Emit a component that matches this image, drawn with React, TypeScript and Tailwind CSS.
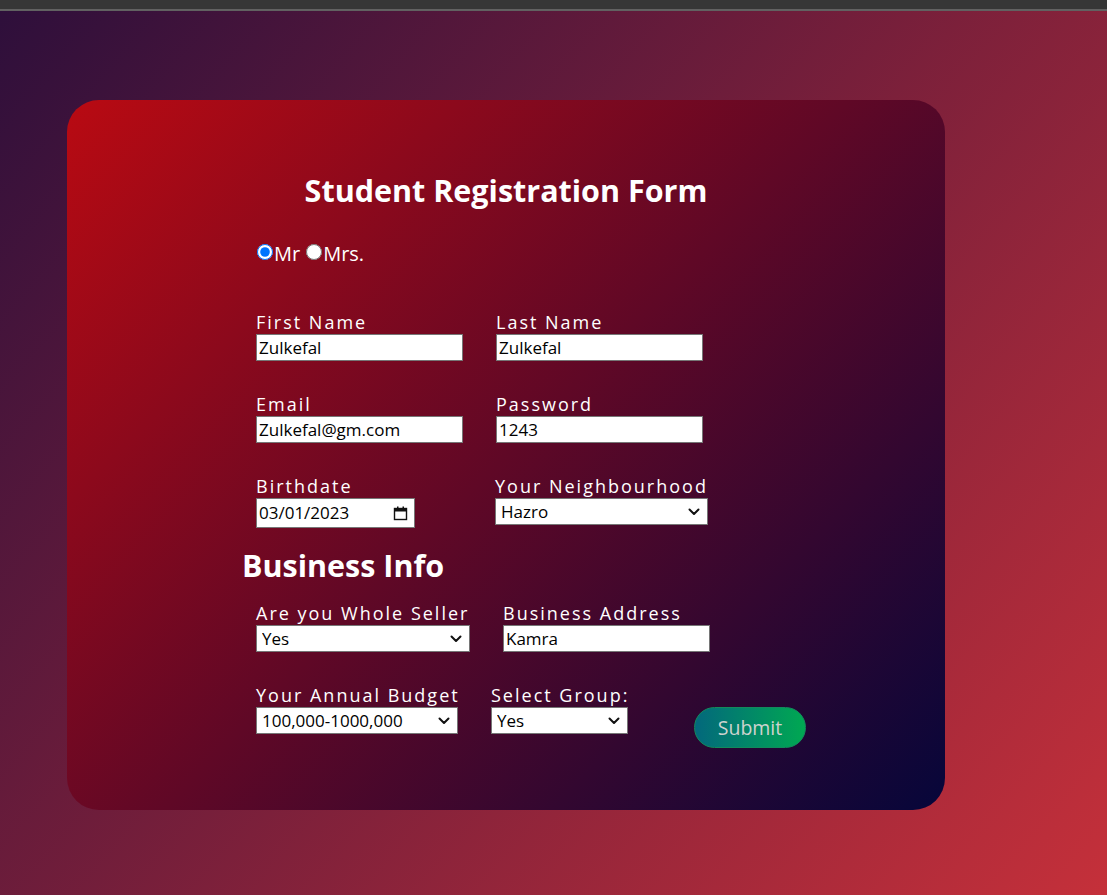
import React from 'react';

function Chevron() {
  return (
    <svg className="pointer-events-none absolute right-[8px] top-1/2 -translate-y-1/2" width="12" height="8" viewBox="0 0 12 8" fill="none">
      <path d="M1.5 1.5L6 6L10.5 1.5" stroke="#111" strokeWidth="2" strokeLinecap="round" strokeLinejoin="round" />
    </svg>
  );
}

function Calendar() {
  return (
    <svg width="15" height="15" viewBox="0 0 15 15" fill="none">
      <rect x="1.5" y="2.5" width="12" height="11" stroke="#111" strokeWidth="1.4" />
      <rect x="1.5" y="2.5" width="12" height="3" fill="#111" />
      <rect x="4" y="0.5" width="1.5" height="3" fill="#111" />
      <rect x="9.5" y="0.5" width="1.5" height="3" fill="#111" />
    </svg>
  );
}

function Label({ children }: { children: React.ReactNode }) {
  return <label className="block text-[18px] leading-[24px] tracking-[2px] text-white whitespace-nowrap">{children}</label>;
}

function TextInput({ value, width }: { value: string; width: string }) {
  return (
    <input
      type="text"
      defaultValue={value}
      className={`${width} block h-[27px] border border-[#767676] bg-white pl-[2px] text-[17px] text-black outline-none`}
    />
  );
}

function Select({ value, width, options }: { value: string; width: string; options: string[] }) {
  return (
    <div className={`${width} relative h-[27px]`}>
      <select
        defaultValue={value}
        className="block h-full w-full appearance-none border border-[#767676] bg-white pl-[5px] text-[17px] text-black outline-none"
      >
        {options.map((o) => (
          <option key={o}>{o}</option>
        ))}
      </select>
      <Chevron />
    </div>
  );
}

export default function App() {
  return (
    <div className="flex min-h-screen flex-col font-['Open_Sans',sans-serif]">
      <div className="h-[9px] bg-[#363636]" />
      <div className="h-[2px] bg-[#616161]" />
      <div className="flex-1 bg-[linear-gradient(131deg,#2e0f3b,#c5303a)] pl-[67px] pt-[89px]">
        <form
          onSubmit={(e) => e.preventDefault()}
          className="h-[710px] w-[878px] rounded-[32px] bg-[linear-gradient(134deg,#b90a12,#06063a)] pt-[70px]"
        >
          <h1 className="text-center text-[30.5px] font-bold leading-[40px] text-white">Student Registration Form</h1>

          <div className="ml-[189px] mt-[30px] flex h-[28px] items-center text-[20px] leading-[28px] text-white">
            <input type="radio" name="title" defaultChecked className="mb-[5px] ml-[1px] h-[16px] w-[16px]" />
            <span className="ml-[1px]">Mr</span>
            <input type="radio" name="title" className="mb-[5px] ml-[6px] h-[16px] w-[16px]" />
            <span className="ml-[1px]">Mrs.</span>
          </div>

          <div className="ml-[189px] mt-[42px] grid grid-cols-[240px_auto] gap-y-[31px]">
            <div>
              <Label>First Name</Label>
              <TextInput value="Zulkefal" width="w-[207px]" />
            </div>
            <div>
              <Label>Last Name</Label>
              <TextInput value="Zulkefal" width="w-[207px]" />
            </div>
            <div>
              <Label>Email</Label>
              <TextInput value="Zulkefal@gm.com" width="w-[207px]" />
            </div>
            <div>
              <Label>Password</Label>
              <TextInput value="1243" width="w-[207px]" />
            </div>
            <div>
              <Label>Birthdate</Label>
              <div className="flex h-[30px] w-[159px] items-center justify-between border border-[#767676] bg-white pl-[2px] pr-[6px] text-[17px] text-black">
                <span>03/01/2023</span>
                <Calendar />
              </div>
            </div>
            <div className="-ml-[1px]">
              <Label>Your Neighbourhood</Label>
              <Select value="Hazro" width="w-[213px]" options={['Hazro', 'Attock', 'Kamra']} />
            </div>
          </div>

          <h2 className="ml-[175px] mt-[17px] text-[30.5px] font-bold leading-[40px] text-white">Business Info</h2>

          <div className="ml-[189px] mt-[16px] flex">
            <div className="w-[214px]">
              <Label>Are you Whole Seller</Label>
              <Select value="Yes" width="w-[214px]" options={['Yes', 'No']} />
            </div>
            <div className="ml-[33px] w-[207px]">
              <Label>Business Address</Label>
              <TextInput value="Kamra" width="w-[207px]" />
            </div>
          </div>

          <div className="ml-[189px] mt-[31px] flex items-start">
            <div className="w-[202px]">
              <Label>Your Annual Budget</Label>
              <Select value="100,000-1000,000" width="w-[202px]" options={['100,000-1000,000', '1000,000-5000,000']} />
            </div>
            <div className="ml-[33px] w-[137px]">
              <Label>Select Group:</Label>
              <Select value="Yes" width="w-[137px]" options={['Yes', 'No']} />
            </div>
            <button
              type="submit"
              className="ml-[66px] mt-[24px] h-[41px] w-[112px] rounded-full border border-[#138a5c] bg-[linear-gradient(90deg,#03687c,#00a852)] text-[19.5px] text-[#cdd3cf]"
            >
              Submit
            </button>
          </div>
        </form>
      </div>
    </div>
  );
}
